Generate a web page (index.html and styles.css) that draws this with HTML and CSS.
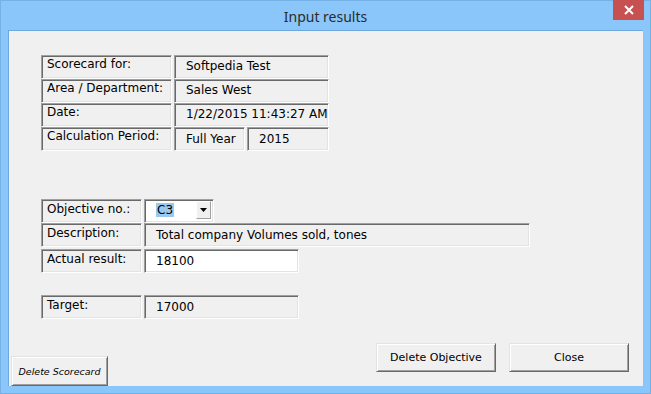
FILE: index.html
```html
<!DOCTYPE html>
<html lang="en">
<head>
    <meta charset="UTF-8">
    <meta name="viewport" content="width=device-width, initial-scale=1.0">
    <title>Input results</title>
    <link rel="stylesheet" href="styles.css">
</head>
<body>
    <div class="window">
        <div class="titlebar">
            <span class="title">Input results</span>
            <button class="close-x" title="Close">
                <svg width="10" height="10" viewBox="0 0 10 10">
                    <path d="M1 1 L9 9 M9 1 L1 9" stroke="#fff" stroke-width="2"/>
                </svg>
            </button>
        </div>

        <div class="client">
            <div class="fields header-fields">
                <div class="row">
                    <div class="label sunken">Scorecard for:</div>
                    <div class="value sunken head-value">Softpedia Test</div>
                </div>
                <div class="row">
                    <div class="label sunken">Area / Department:</div>
                    <div class="value sunken head-value">Sales West</div>
                </div>
                <div class="row">
                    <div class="label sunken">Date:</div>
                    <div class="value sunken head-value">1/22/2015 11:43:27 AM</div>
                </div>
                <div class="row">
                    <div class="label sunken">Calculation Period:</div>
                    <div class="value sunken period">Full Year</div>
                    <div class="value sunken year">2015</div>
                </div>
            </div>

            <div class="fields objective-fields">
                <div class="row">
                    <div class="label sunken">Objective no.:</div>
                    <div class="combo sunken">
                        <span class="selected">C3</span>
                        <span class="drop-btn">
                            <svg width="7" height="4" viewBox="0 0 7 4"><path d="M0 0 H7 L3.5 4 Z" fill="#000"/></svg>
                        </span>
                    </div>
                </div>
                <div class="row">
                    <div class="label sunken">Description:</div>
                    <div class="value sunken description">Total company Volumes sold, tones</div>
                </div>
                <div class="row row-spaced">
                    <div class="label sunken">Actual result:</div>
                    <div class="value sunken textbox">18100</div>
                </div>
            </div>

            <div class="fields target-fields">
                <div class="row">
                    <div class="label sunken">Target:</div>
                    <div class="value sunken target">17000</div>
                </div>
            </div>

            <div class="footer">
                <button class="btn raised btn-scorecard">Delete Scorecard</button>
                <div class="footer-right">
                    <button class="btn raised">Delete Objective</button>
                    <button class="btn raised">Close</button>
                </div>
            </div>
        </div>
    </div>
</body>
</html>
```

FILE: styles.css
```css
body {
    margin: 0;
    padding: 0;
    background-color: #8ac6f9;
    font-family: "DejaVu Sans", Verdana, sans-serif;
    font-size: 12px;
    color: #000;
}

.window {
    width: 651px;
    height: 394px;
    background-color: #8ac6f9;
    display: flex;
    flex-direction: column;
    box-sizing: border-box;
    border: 1px solid #76b1e6;
}

.titlebar {
    position: relative;
    height: 29px;
    text-align: center;
}

.title {
    font-family: "Noto Sans", "Open Sans", sans-serif;
    font-size: 14px;
    line-height: 31px;
    color: #2b2b2b;
}

.close-x {
    position: absolute;
    top: -1px;
    right: 6px;
    width: 31px;
    height: 20px;
    border: none;
    padding: 0;
    background-color: #c75050;
    display: flex;
    align-items: center;
    justify-content: center;
}

.client {
    flex-grow: 1;
    margin: 0 7px 7px 7px;
    background-color: #f0f0f0;
    display: flex;
    flex-direction: column;
    border-top: 1px solid #6fa8dc;
    border-left: 1px solid #6fa8dc;
}

.fields {
    margin-left: 32px;
    display: flex;
    flex-direction: column;
}

.header-fields {
    margin-top: 24px;
}

.objective-fields {
    margin-top: 48px;
}

.target-fields {
    margin-top: 22px;
}

.row {
    display: flex;
    gap: 2px;
    height: 24px;
}

.row-spaced {
    margin-top: 2px;
}

.sunken {
    box-sizing: border-box;
    height: 24px;
    border: 1px solid;
    border-color: #a0a0a0 #fff #fff #a0a0a0;
    box-shadow: inset 1px 1px #696969, inset -1px -1px #e3e3e3;
    line-height: 14px;
    white-space: nowrap;
    overflow: hidden;
}

.label {
    padding: 2px 0 0 5px;
}

.header-fields .label {
    width: 131px;
    padding-top: 1px;
}

.objective-fields .label,
.target-fields .label {
    width: 101px;
}

.value {
    padding: 4px 0 0 11px;
}

.head-value {
    width: 155px;
    padding-top: 3px;
}

.period {
    width: 71px;
    padding-top: 4px;
}

.year {
    width: 82px;
    padding-top: 4px;
}

.description {
    width: 386px;
}

.textbox {
    width: 155px;
    background-color: #fff;
}

.target {
    width: 155px;
}

.combo {
    width: 70px;
    background-color: #fff;
    display: flex;
    justify-content: space-between;
    padding: 3px 2px 0 11px;
}

.selected {
    display: block;
    height: 14px;
    padding: 0 1px;
    background-color: #99c9ef;
}

.drop-btn {
    width: 15px;
    height: 18px;
    margin-top: -2px;
    box-sizing: border-box;
    background-color: #f0f0f0;
    border: 1px solid;
    border-color: #fff #a0a0a0 #a0a0a0 #fff;
    display: flex;
    align-items: center;
    justify-content: center;
}

.footer {
    margin-top: auto;
    display: flex;
    align-items: flex-end;
}

.footer-right {
    margin-left: auto;
    margin-right: 14px;
    margin-bottom: 14px;
    display: flex;
    gap: 13px;
}

.btn {
    box-sizing: border-box;
    width: 120px;
    height: 29px;
    padding: 0;
    background-color: #f0f0f0;
    font-family: "DejaVu Sans", Verdana, sans-serif;
    font-size: 11px;
    color: #000;
}

.raised {
    border: 1px solid;
    border-color: #e3e3e3 #696969 #696969 #e3e3e3;
    box-shadow: inset 1px 1px #fff, inset -1px -1px #a0a0a0;
}

.btn-scorecard {
    width: 97px;
    height: 30px;
    margin-left: 2px;
    font-size: 9.5px;
    font-style: italic;
}
```
